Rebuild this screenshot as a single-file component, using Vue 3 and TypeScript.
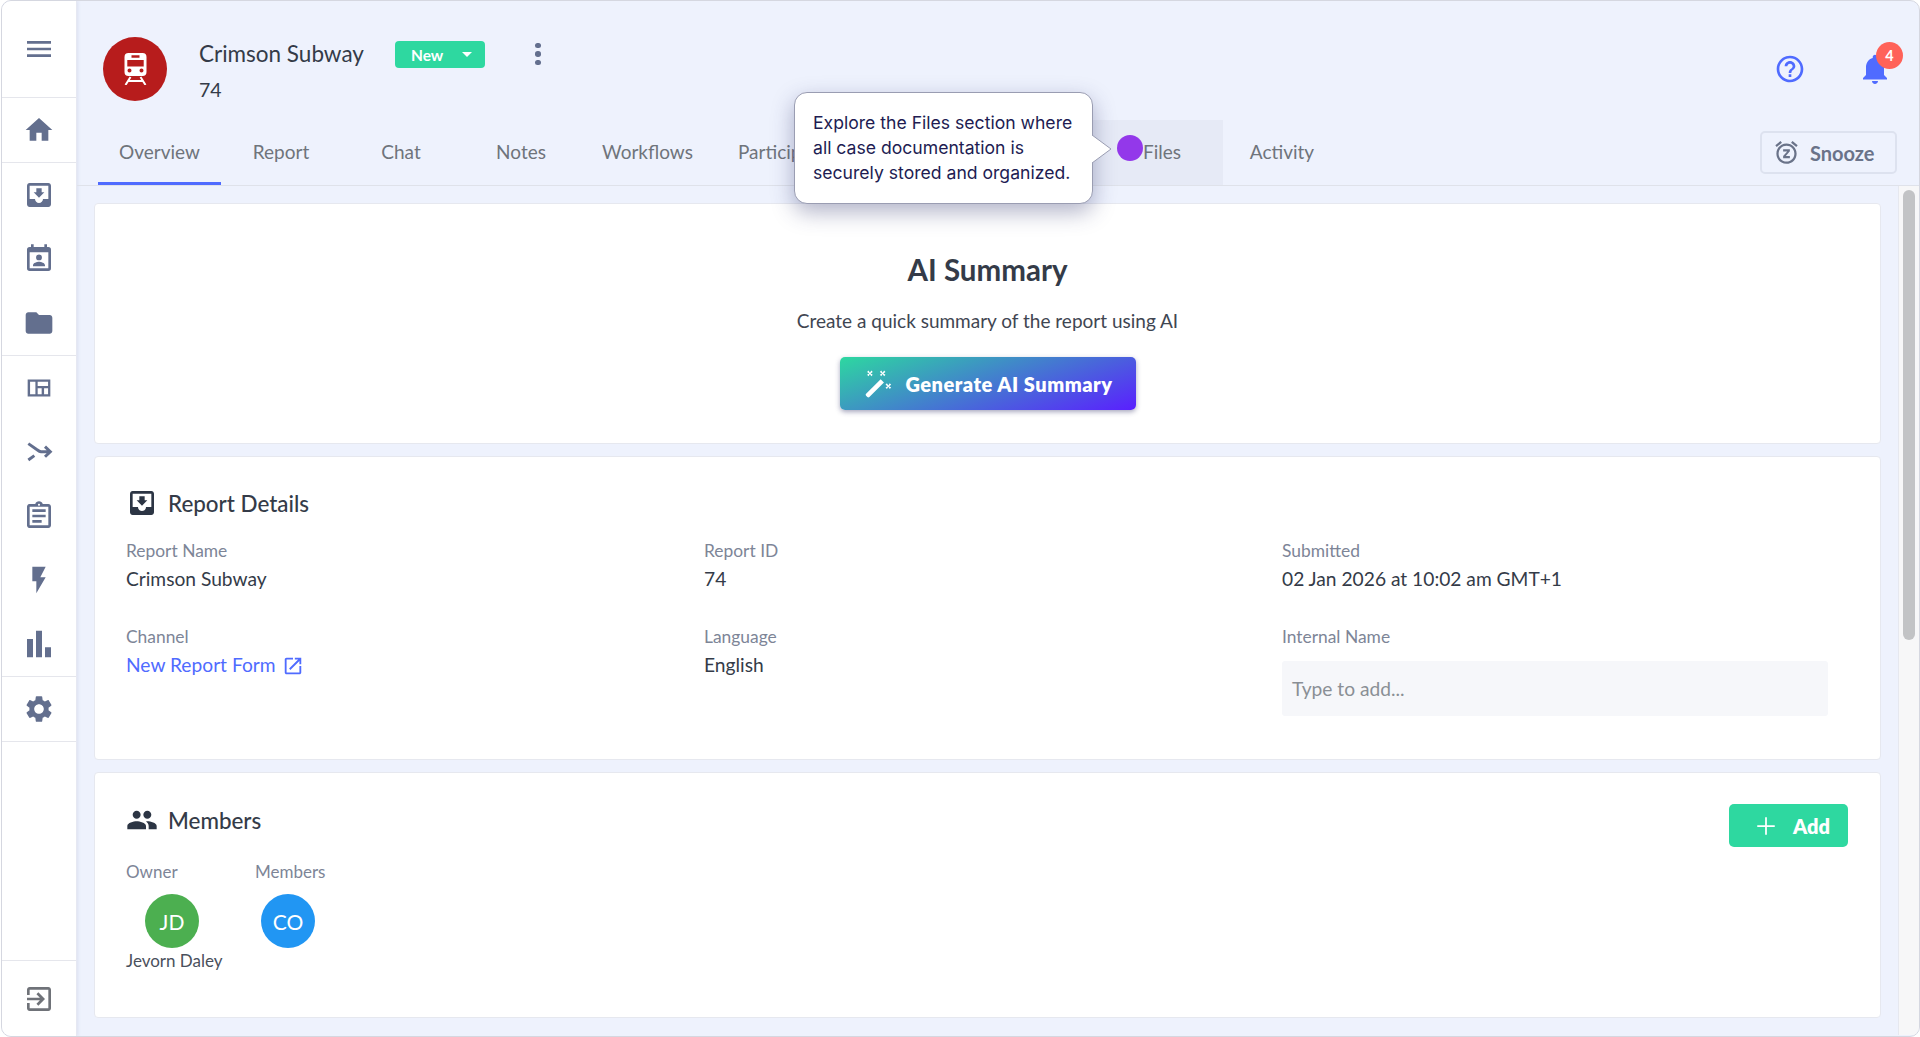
<script setup lang="ts">
const d = {
  menu: 'M3 18h18v-2H3v2zm0-5h18v-2H3v2zm0-7v2h18V6H3z',
  home: 'M10 20v-6h4v6h5v-8h3L12 3 2 12h3v8z',
  inbox: 'M19 3H4.99c-1.11 0-1.98.9-1.98 2L3 19c0 1.1.88 2 1.99 2H19c1.1 0 2-.9 2-2V5c0-1.1-.9-2-2-2zm0 12h-4c0 1.66-1.35 3-3 3s-3-1.34-3-3H4.99V5H19v10zm-3-5h-2V7h-4v3H8l4 4 4-4z',
  calendar: 'M19 3h-1V1h-2v2H8V1H6v2H5a2 2 0 0 0-2 2v14a2 2 0 0 0 2 2h14a2 2 0 0 0 2-2V5a2 2 0 0 0-2-2zm0 16H5V7h14v12zM12 13a2.2 2.2 0 1 0 0-4.4 2.2 2.2 0 0 0 0 4.4zm4.5 4.5H7.5v-.9c0-1.7 3-2.6 4.5-2.6s4.500.9 4.500 2.600v.9z',
  folder: 'M10 4H4c-1.1 0-1.99.9-1.99 2L2 18c0 1.1.9 2 2 2h16c1.1 0 2-.9 2-2V8c0-1.1-.9-2-2-2h-8l-2-2z',
  quilt: 'M3.500 5.700h17v12.600h-17zM5.300 7.400v9.200h4v-9.200zM11 7.400v3.100h7.800v-3.100zM11 12.200v4.400h3v-4.400zM15.800 12.200v4.400h3v-4.400z',
  clipboard: 'M7 15h7v2H7zm0-4h10v2H7zm0-4h10v2H7zm12-4h-4.18C14.4 1.84 13.3 1 12 1c-1.3 0-2.4.84-2.82 2H5c-.14 0-.27.01-.4.04-.39.08-.74.28-1.01.55-.18.18-.33.4-.43.64-.1.23-.16.49-.16.77v14c0 .27.06.54.16.78s.25.45.43.64c.27.27.62.47 1.01.55.13.02.26.03.4.03h14c1.1 0 2-.9 2-2V5c0-1.1-.9-2-2-2zm-7-.25c.41 0 .75.34.75.75s-.34.75-.75.75-.75-.34-.75-.75.34-.75.75-.75zM19 19H5V5h14v14z',
  bolt: 'M7 2v11h3v9l7-12h-4l4-8z',
  chart: 'M3 8.300h4.500V22H3zM9.750 2h4.500v20h-4.500zM16.500 14.500H21V22h-4.500z',
  gear: 'M19.14 12.94c.04-.3.06-.61.06-.94 0-.32-.02-.64-.07-.94l2.03-1.58c.18-.14.23-.41.12-.61l-1.92-3.32c-.12-.22-.37-.29-.59-.22l-2.39.96c-.5-.38-1.03-.7-1.62-.94l-.36-2.54c-.04-.24-.24-.41-.48-.41h-3.84c-.24 0-.43.17-.47.41l-.36 2.54c-.59.24-1.13.57-1.62.94l-2.39-.96c-.22-.08-.47 0-.59.22L2.74 8.87c-.12.21-.08.47.12.61l2.03 1.58c-.05.3-.09.63-.09.94s.02.64.07.94l-2.03 1.58c-.18.14-.23.41-.12.61l1.92 3.32c.12.22.37.29.59.22l2.39-.96c.5.38 1.03.7 1.62.94l.36 2.54c.05.24.24.41.48.41h3.84c.24 0 .44-.17.47-.41l.36-2.54c.59-.24 1.13-.56 1.62-.94l2.39.96c.22.08.47 0 .59-.22l1.92-3.32c.12-.22.07-.47-.12-.61l-2.01-1.58zM12 15.600c-1.98 0-3.6-1.62-3.6-3.6s1.62-3.6 3.6-3.6 3.6 1.62 3.6 3.6-1.62 3.6-3.6 3.6z',
  exit: 'M10.09 15.59L11.5 17l5-5-5-5-1.41 1.41L12.67 11H3v2h9.67l-2.58 2.59zM19 3H5c-1.11 0-2 .9-2 2v4h2V5h14v14H5v-4H3v4c0 1.1.89 2 2 2h14c1.1 0 2-.9 2-2V5c0-1.1-.9-2-2-2z',
  help: 'M11 18h2v-2h-2v2zm1-16C6.48 2 2 6.48 2 12s4.48 10 10 10 10-4.48 10-10S17.52 2 12 2zm0 18c-4.41 0-8-3.59-8-8s3.59-8 8-8 8 3.59 8 8-3.59 8-8 8zm0-14c-2.21 0-4 1.79-4 4h2c0-1.1.9-2 2-2s2 .9 2 2c0 2-3 1.750-3 5h2c0-2.250 3-2.500 3-5 0-2.210-1.790-4-4-4z',
  bell: 'M12 22c1.1 0 2-.9 2-2h-4c0 1.1.89 2 2 2zm6-6v-5c0-3.070-1.640-5.640-4.500-6.320V4c0-.83-.67-1.500-1.500-1.500s-1.500.67-1.500 1.500v.68C7.630 5.360 6 7.920 6 11v5l-2 2v1h16v-1l-2-2z',
  snooze: 'M9 11h3.630L9 15.200V17h6v-2h-3.630L15 10.800V9H9v2zm7.056-7.654l1.282-1.535 4.607 3.850-1.280 1.540zM3.336 7.190l-1.280-1.536L6.662 1.800l1.280 1.536zM12 6c3.860 0 7 3.140 7 7s-3.140 7-7 7-7-3.140-7-7 3.140-7 7-7m0-2c-4.970 0-9 4.030-9 9s4.030 9 9 9 9-4.030 9-9-4.030-9-9-9z',
  open: 'M19 19H5V5h7V3H5c-1.110 0-2 .9-2 2v14c0 1.100.89 2 2 2h14c1.100 0 2-.9 2-2v-7h-2v7zM14 3v2h3.590l-9.830 9.830 1.410 1.410L19 6.410V10h2V3h-7z',
  people: 'M16 11c1.660 0 2.990-1.340 2.990-3S17.660 5 16 5c-1.660 0-3 1.340-3 3s1.340 3 3 3zm-8 0c1.660 0 2.990-1.340 2.990-3S9.660 5 8 5C6.340 5 5 6.340 5 8s1.340 3 3 3zm0 2c-2.330 0-7 1.170-7 3.500V19h14v-2.500c0-2.330-4.670-3.500-7-3.500zm8 0c-.29 0-.62.020-.97.050 1.160.84 1.970 1.970 1.970 3.450V19h6v-2.500c0-2.330-4.670-3.500-7-3.500z',
  add: 'M19 12.700h-6.300V19h-1.400v-6.300H5v-1.400h6.300V5h1.400v6.300H19z',
  wand: 'M14.600 8.600l2.300 2.300L6.600 21.200a1 1 0 0 1-1.400 0l-.9-.9a1 1 0 0 1 0-1.400zM6 2.500l1 1.500 1-1.500 1 1-1.500 1 1.500 1-1 1-1-1.500-1 1.500-1-1 1.500-1-1.500-1zM15 2.500l1 1.500 1-1.500 1 1-1.500 1 1.500 1-1 1-1-1.500-1 1.500-1-1 1.500-1-1.500-1zM19 11.500l1 1.500 1-1.500 1 1-1.500 1 1.500 1-1 1-1-1.500-1 1.500-1-1 1.500-1-1.500-1z'
}

const sideGroups: { key: keyof typeof d | 'split' }[][] = [
  [{ key: 'home' }],
  [{ key: 'inbox' }, { key: 'calendar' }, { key: 'folder' }],
  [{ key: 'quilt' }, { key: 'split' }, { key: 'clipboard' }, { key: 'bolt' }, { key: 'chart' }],
  [{ key: 'gear' }]
]
const iconPath = (k: string): string => (d as Record<string, string>)[k]

const tabs = [
  { name: 'Overview', cls: 'tab-overview' },
  { name: 'Report', cls: '' },
  { name: 'Chat', cls: '' },
  { name: 'Notes', cls: '' },
  { name: 'Workflows', cls: 'tab-workflows' },
  { name: 'Participants', cls: 'tab-participants' },
  { name: 'Files', cls: 'tab-files' },
  { name: 'Activity', cls: 'tab-activity' }
]
</script>

<template>
  <div class="frame">
    <aside class="sidebar">
      <div class="side-top">
        <svg class="side-icon" viewBox="0 0 24 24"><path :d="d.menu" /></svg>
      </div>
      <div v-for="(group, i) in sideGroups" :key="i" class="side-group">
        <div v-for="item in group" :key="item.key" class="side-item">
          <svg v-if="item.key === 'split'" class="side-icon" viewBox="0 0 24 24">
            <path d="M4 5.700l6 4.200c1.200.8 2 1.700 3.500 1.900h6M16.500 8l4 3.800-4 3.800M4 18l4.500-3.300" fill="none" stroke="currentColor" stroke-width="2.200" />
          </svg>
          <svg v-else class="side-icon" viewBox="0 0 24 24"><path :d="iconPath(item.key)" fill-rule="evenodd" /></svg>
        </div>
      </div>
      <div class="side-spacer"></div>
      <div class="side-exit">
        <svg class="side-icon exit-icon" viewBox="0 0 24 24"><path :d="d.exit" /></svg>
      </div>
    </aside>

    <main class="main">
      <header class="head">
        <div class="avatar-red">
          <svg class="train" viewBox="0 0 22 32">
            <path d="M4 0h14a4 4 0 0 1 4 4v15a4 4 0 0 1-4 4H4a4 4 0 0 1-4-4V4a4 4 0 0 1 4-4zM7 2.200v2.600h8V2.200zM2.800 7v6.500h16.400V7zM5 15.500a2 2 0 1 0 0 4 2 2 0 0 0 0-4zm12 0a2 2 0 1 0 0 4 2 2 0 0 0 0-4z" fill="#fff" fill-rule="evenodd" />
            <path d="M6 24L1 32M16 24l5 8M3.500 28h15" stroke="#fff" stroke-width="2" fill="none" />
          </svg>
        </div>
        <div class="head-title">
          <div class="title-row">
            <span class="title-name">Crimson Subway</span>
            <span class="status">New<i class="caret"></i></span>
            <span class="dots"><i></i><i></i><i></i></span>
          </div>
          <div class="title-id">74</div>
        </div>
        <div class="head-actions">
          <svg class="help" viewBox="0 0 24 24"><path :d="d.help" /></svg>
          <div class="bell-wrap">
            <svg class="bell" viewBox="0 0 24 24"><path :d="d.bell" /></svg>
            <span class="bell-badge">4</span>
          </div>
        </div>
      </header>

      <nav class="tabs">
        <div v-for="t in tabs" :key="t.name" class="tab" :class="t.cls">{{ t.name }}</div>
        <div class="tabs-spacer"></div>
        <button class="snooze">
          <svg viewBox="0 0 24 24"><path :d="d.snooze" /></svg>
          <span>Snooze</span>
        </button>
      </nav>

      <div class="scroller">
        <div class="cards">
          <section class="card card-ai">
            <h2>AI Summary</h2>
            <p>Create a quick summary of the report using AI</p>
            <button class="gen">
              <svg viewBox="0 0 24 24"><path :d="d.wand" /></svg>
              <span>Generate AI Summary</span>
            </button>
          </section>

          <section class="card card-details">
            <div class="section-head">
              <svg viewBox="0 0 24 24"><path :d="d.inbox" /></svg>
              <h3>Report Details</h3>
            </div>
            <div class="details-grid">
              <div class="field"><label>Report Name</label><div class="value">Crimson Subway</div></div>
              <div class="field"><label>Report ID</label><div class="value">74</div></div>
              <div class="field"><label>Submitted</label><div class="value">02 Jan 2026 at 10:02 am GMT+1</div></div>
              <div class="field">
                <label>Channel</label>
                <div class="value link">New Report Form <svg viewBox="0 0 24 24"><path :d="d.open" /></svg></div>
              </div>
              <div class="field"><label>Language</label><div class="value">English</div></div>
              <div class="field">
                <label>Internal Name</label>
                <div class="input">Type to add...</div>
              </div>
            </div>
          </section>

          <section class="card card-members">
            <div class="members-top">
              <div class="section-head">
                <svg viewBox="0 0 24 24"><path :d="d.people" /></svg>
                <h3>Members</h3>
              </div>
              <button class="add">
                <svg viewBox="0 0 24 24"><path :d="d.add" /></svg>
                <span>Add</span>
              </button>
            </div>
            <div class="people">
              <div class="person owner">
                <label>Owner</label>
                <div class="circle green">JD</div>
                <div class="person-name">Jevorn Daley</div>
              </div>
              <div class="person member">
                <label>Members</label>
                <div class="circle blue">CO</div>
              </div>
            </div>
          </section>
        </div>
        <div class="scrollbar"><div class="thumb"></div></div>
      </div>
    </main>

    <div class="tooltip">
      Explore the Files section where all case documentation is securely stored and organized.
      <svg class="arrow" viewBox="0 0 20 28"><path d="M0 0L19 14 0 28" fill="#fff" stroke="#9a9db2" stroke-width="1" /></svg>
    </div>
    <div class="dot"></div>
  </div>
</template>

<style>
html, body { margin: 0; background: #fff; overflow: hidden; }
</style>

<style scoped>
* { box-sizing: border-box; }
.frame {
  position: relative;
  display: flex;
  height: 1037px;
  width: 1919px;
  margin-left: 1px;
  border: 1px solid #d5d7e0;
  border-radius: 10px;
  overflow: hidden;
  background: #eef2fd;
  font-family: "Lato", "Noto Sans", sans-serif;
  color: #343b48;
}
.sidebar {
  width: 75px;
  flex: none;
  display: flex;
  flex-direction: column;
  background: #fff;
  border-right: 1px solid #e6e8f2;
  box-shadow: 1px 0 3px rgba(120, 130, 170, .15);
  color: #636f8e;
}
.side-top { height: 96px; display: flex; align-items: center; justify-content: center; }
.side-group { border-top: 1px solid #e5e6ec; }
.side-item { height: 64px; display: flex; align-items: center; justify-content: center; }
.side-icon { width: 32px; height: 32px; fill: currentColor; display: block; }
.side-spacer { flex: 1; border-top: 1px solid #e5e6ec; }
.side-exit { height: 76px; border-top: 1px solid #e5e6ec; display: flex; align-items: center; justify-content: center; }
.exit-icon { color: #6f7278; }

.main { flex: 1; min-width: 0; display: flex; flex-direction: column; }
.head { height: 119px; display: flex; align-items: flex-start; padding: 36px 0 0 26px; }
.avatar-red {
  width: 64px; height: 64px; border-radius: 50%;
  background: #b71c1c;
  display: flex; align-items: center; justify-content: center;
  flex: none;
}
.train { width: 23px; height: 32px; }
.head-title { margin-left: 32px; margin-top: -1px; }
.title-row { display: flex; align-items: center; height: 34px; }
.title-name { font-size: 22.500px; color: #343b48; width: 196px; }
.status {
  width: 90px; height: 27px; margin-top: 3px; border-radius: 4px;
  background: #2ed8a0; color: #fff; font-size: 15.500px; font-weight: 700;
  display: flex; align-items: center; padding-left: 16px; position: relative;
}
.caret {
  position: absolute; right: 13px; top: 11px;
  border: 5px solid transparent; border-top-color: #fff; border-bottom: 0;
}
.dots { display: flex; flex-direction: column; gap: 3px; margin: 2px 0 0 50px; }
.dots i { width: 5.500px; height: 5.500px; border-radius: 50%; background: #636f8e; }
.title-id { font-size: 19.500px; margin-top: 3px; line-height: 34px; }
.head-actions { margin-left: auto; display: flex; align-items: center; padding: 14px 26px 0 0; }
.help { width: 32px; height: 32px; fill: #4f6bff; }
.bell-wrap { position: relative; width: 36px; height: 36px; margin-left: 51px; }
.bell { width: 36px; height: 36px; fill: #4f6bff; }
.bell-badge {
  position: absolute; top: -9px; right: -10px;
  width: 27px; height: 27px; border-radius: 50%;
  background: #ff6259; color: #fff; font-size: 14.500px; font-weight: 700;
  display: flex; align-items: center; justify-content: center;
}

.tabs {
  height: 66px; display: flex; align-items: stretch;
  padding: 0 22px 0 21px;
  border-bottom: 1px solid #dfe2ea;
}
.tab {
  width: 120px; display: flex; align-items: center; justify-content: center;
  font-size: 19px; color: #6f747b; padding-bottom: 2px;
}
.tab-overview { width: 123px; box-shadow: inset 0 -3px 0 #4f6bff; }
.tab-workflows { width: 136px; padding-right: 3px; }
.tab-participants { width: 346px; justify-content: flex-start; padding-left: 21px; }
.tab-files { width: 160px; justify-content: flex-end; padding-right: 42px; background: #e6eaf6; }
.tab-activity { padding-right: 2px; }
.tabs-spacer { flex: 1; }
.snooze {
  align-self: center;
  width: 137px; height: 43px; border: 2px solid #dde2ef; border-radius: 5px;
  background: transparent; color: #6a7389;
  display: flex; align-items: center; padding: 0 0 0 11px; gap: 10px;
  font: 700 20px "Lato", sans-serif;
}
.snooze svg { width: 27px; height: 27px; fill: #6a7389; flex: none; }

.scroller { flex: 1; min-height: 0; display: flex; overflow: hidden; }
.cards { flex: 1; min-width: 0; padding: 17px 17px 0 17px; display: flex; flex-direction: column; gap: 12px; }
.card {
  background: #fff; border: 1px solid #e6e8ef; border-radius: 4px;
  flex: none;
}
.card-ai {
  height: 241px; display: flex; flex-direction: column; align-items: center;
  padding-top: 46px;
}
.card-ai h2 { margin: 0; font-size: 29.500px; line-height: 40px; font-weight: 700; color: #343b48; }
.card-ai p { margin: 16px 0 0; font-size: 19px; line-height: 30px; color: #3f4652; }
.gen {
  margin-top: 21px; width: 296px; height: 53px; border: 0; border-radius: 5px;
  background: linear-gradient(160deg, #2dd8a0 0%, #5a1fff 100%);
  box-shadow: 0 2px 5px rgba(60, 60, 110, .45);
  color: #fff; display: flex; align-items: center; padding: 0 0 0 20px; gap: 12px;
  font: 800 20px "Lato", sans-serif; letter-spacing: .5px;
}
.gen svg { width: 34px; height: 34px; fill: #fff; flex: none; }

.card-details { height: 304px; padding: 30px 32px 0 31px; }
.section-head { display: flex; align-items: center; }
.section-head svg { width: 32px; height: 32px; fill: #2c3544; margin-right: 10px; }
.section-head h3 { margin: 0; font-size: 22.400px; font-weight: 500; color: #343b48; }
.details-grid {
  display: grid; grid-template-columns: repeat(3, 578px);
  grid-auto-rows: 85.500px; margin-top: 21px;
}
.field label { display: block; font-size: 17.400px; line-height: 22px; color: #7d8597; }
.value { font-size: 19.200px; line-height: 30px; margin-top: 2px; color: #343b48; }
.link { color: #4f6bff; display: flex; align-items: center; gap: 6px; }
.link svg { width: 22px; height: 22px; fill: #4f6bff; margin-top: 2px; }
.input {
  width: 546px; height: 55px; margin-top: 13px; background: #f6f7fa;
  border-radius: 3px; display: flex; align-items: center; padding-left: 10px;
  color: #8a8f95; font-size: 19.200px;
}

.card-members { height: 246px; padding: 31px 32px 0 31px; }
.members-top { display: flex; justify-content: space-between; align-items: flex-start; height: 43px; }
.add {
  width: 119px; height: 43px; margin-top: 0; border: 0; border-radius: 5px;
  background: #2ed8a0; color: #fff;
  display: flex; align-items: center; padding: 0 0 0 22px; gap: 12px;
  font: 800 20px "Lato", sans-serif;
}
.add svg { width: 30px; height: 30px; fill: #fff; flex: none; }
.people { display: flex; margin-top: 14px; }
.person label { display: block; font-size: 17px; line-height: 22px; color: #7d8597; }
.owner { width: 129px; }
.circle {
  width: 54px; height: 54px; border-radius: 50%; color: #fff;
  display: flex; align-items: center; justify-content: center;
  font-size: 21px; margin-top: 11px;
}
.owner .circle { margin-left: 19px; }
.member .circle { margin-left: 6px; }
.green { background: #4caf50; }
.blue { background: #2196f3; }
.person-name { font-size: 17px; line-height: 26px; margin-top: 0; color: #4a505c; }

.scrollbar { width: 21px; flex: none; background: #f7f7f8; border-left: 1px solid #e6e8ef; margin-bottom: 1px; padding: 4px 4px 0 4px; }
.thumb { height: 450px; border-radius: 6px; background: #c2c3c5; }

.tooltip {
  position: absolute; left: 792px; top: 91px;
  width: 299px; height: 112px;
  background: #fff; border: 1px solid #9a9db2; border-radius: 13px;
  box-shadow: 0 8px 22px rgba(50, 55, 110, .38);
  padding: 17px 12px 0 18px;
  font: 400 17.600px/25px "Inter", sans-serif; color: #211c52;
}
.arrow { position: absolute; left: 297px; top: 42px; width: 20px; height: 28px; }
.dot {
  position: absolute; left: 1115px; top: 134px;
  width: 26px; height: 26px; border-radius: 50%; background: #9338ea;
}
</style>
